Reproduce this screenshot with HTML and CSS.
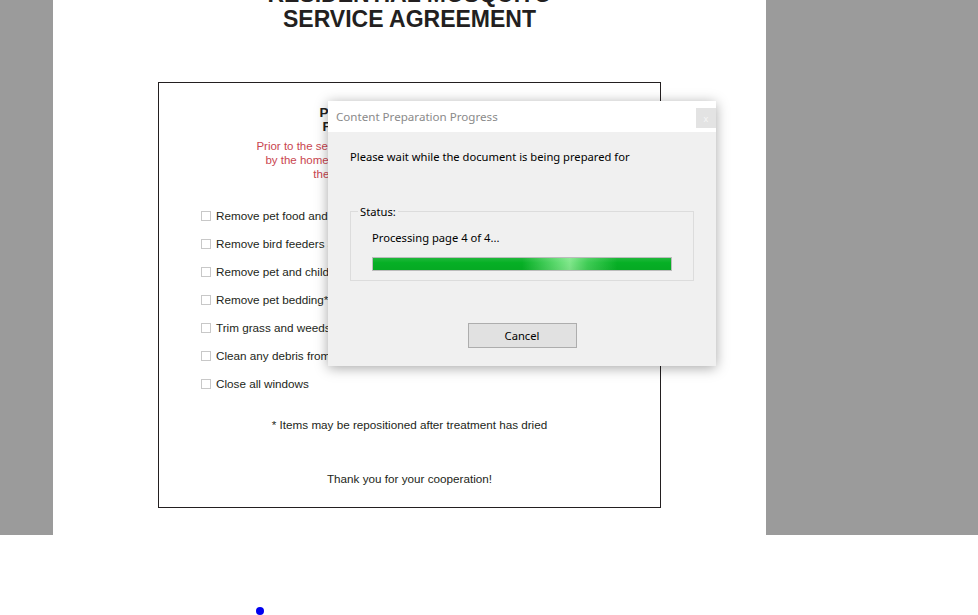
FILE: index.html
```html
<!DOCTYPE html>
<html>
<head>
<meta charset="utf-8">
<link rel="stylesheet" href="styles.css">
</head>
<body>
<div class="viewer">
  <div class="page">
    <h1 class="title">RESIDENTIAL MOSQUITO<br>SERVICE AGREEMENT</h1>
    <div class="box">
      <h2 class="heading">PREPARATIONS FOR YOUR<br>FIRST MOSQUITO SPRAYS</h2>
      <p class="note">Prior to the service, the following items should be completed<br>by the homeowner to ensure a safe and effective service<br>the full protection of your whole family</p>
      <ul class="checklist">
        <li><span class="cb"></span>Remove pet food and water dishes</li>
        <li><span class="cb"></span>Remove bird feeders and bird baths</li>
        <li><span class="cb"></span>Remove pet and children's toys</li>
        <li><span class="cb"></span>Remove pet bedding*</li>
        <li><span class="cb"></span>Trim grass and weeds</li>
        <li><span class="cb"></span>Clean any debris from gutters</li>
        <li><span class="cb"></span>Close all windows</li>
      </ul>
      <p class="foot">* Items may be repositioned after treatment has dried</p>
      <p class="thanks">Thank you for your cooperation!</p>
    </div>
  </div>
</div>
<div class="below"><span class="dot"></span></div>

<div class="dialog">
  <div class="dlg-title">
    <span>Content Preparation Progress</span>
    <span class="close">x</span>
  </div>
  <div class="dlg-body">
    <p class="wait">Please wait while the document is being prepared for</p>
    <fieldset class="status">
      <legend>Status:</legend>
      <p class="proc">Processing page 4 of 4...</p>
      <div class="bar"></div>
    </fieldset>
    <div class="actions"><button class="cancel">Cancel</button></div>
  </div>
</div>
</body>
</html>
```
FILE: styles.css
```css
html, body {
  margin: 0;
  padding: 0;
  background: #fff;
}
body {
  width: 978px;
  height: 615px;
  overflow: hidden;
  position: relative;
  font-family: "Liberation Sans", Arial, sans-serif;
}
.viewer {
  height: 535px;
  background: #9b9b9b;
  display: flex;
  overflow: hidden;
}
.page {
  margin-left: 53px;
  width: 713px;
  height: 535px;
  background: #fff;
  display: flex;
  flex-direction: column;
  align-items: center;
}
.title {
  margin: -18px 0 0 0;
  font-size: 23px;
  line-height: 25px;
  font-weight: bold;
  color: #231f20;
  text-align: center;
}
.box {
  margin-top: 50px;
  width: 501px;
  height: 424px;
  border: 1px solid #231f20;
  box-sizing: content-box;
  display: flex;
  flex-direction: column;
  align-items: center;
}
.heading {
  margin: 23px 0 0 0;
  font-size: 13.5px;
  line-height: 14px;
  font-weight: bold;
  color: #231f20;
  text-align: center;
}
.note {
  margin: 5px 0 0 0;
  font-size: 11.5px;
  line-height: 14px;
  color: #c9454f;
  text-align: center;
}
.checklist {
  list-style: none;
  margin: 28px 0 0 0;
  padding: 0 0 0 42px;
  align-self: stretch;
  display: flex;
  flex-direction: column;
  gap: 14px;
}
.checklist li {
  display: flex;
  align-items: center;
  font-size: 11.7px;
  line-height: 14px;
  color: #231f20;
}
.cb {
  width: 8px;
  height: 8px;
  border: 1px solid #c8c8c8;
  margin-right: 5px;
  flex: none;
}
.foot {
  margin: 27px 0 0 0;
  font-size: 11.7px;
  line-height: 14px;
  color: #231f20;
}
.thanks {
  margin: 40px 0 0 0;
  font-size: 11.7px;
  line-height: 14px;
  color: #231f20;
}
.below {
  height: 80px;
  position: relative;
}
.dot {
  position: absolute;
  left: 256px;
  top: 72px;
  width: 8px;
  height: 8px;
  border-radius: 50%;
  background: #0000f0;
}
.dialog {
  position: absolute;
  left: 328px;
  top: 101px;
  width: 388px;
  height: 265px;
  background: #f0f0f0;
  box-shadow: 0 2px 12px rgba(0,0,0,0.35);
  font-family: "Noto Sans", "Open Sans", sans-serif;
  display: flex;
  flex-direction: column;
}
.dlg-title {
  height: 31px;
  background: #fff;
  display: flex;
  align-items: center;
  justify-content: space-between;
  padding-left: 8px;
  padding-right: 0;
  font-size: 11.6px;
  color: #8a8a8a;
}
.close {
  width: 20px;
  height: 20px;
  background: #e3e3e3;
  color: #f6f6f6;
  font-size: 9px;
  display: flex;
  align-items: center;
  justify-content: center;
  align-self: flex-start;
  margin-top: 7px;
}
.dlg-body {
  padding: 17px 22px 0 22px;
  flex: 1;
  display: flex;
  flex-direction: column;
}
.wait {
  margin: 0;
  font-size: 11.2px;
  line-height: 16px;
  color: #000;
}
.status {
  margin: 39px 0 0 0;
  padding: 11px 21px 9px 21px;
  border: 1px solid #dcdcdc;
  min-width: 0;
}
.status legend {
  padding: 0 2px;
  margin-left: -14px;
  font-size: 11.2px;
  color: #000;
}
.proc {
  margin: 0;
  font-size: 11.2px;
  line-height: 16px;
  color: #000;
}
.bar {
  margin-top: 11px;
  width: 300px;
  height: 14px;
  box-sizing: border-box;
  border: 1px solid #bcbcbc;
  background:
    linear-gradient(to bottom, rgba(255,255,255,0.1), rgba(255,255,255,0) 40%, rgba(0,0,0,0.04)),
    linear-gradient(to right, #06b025 0%, #06b025 50%, #5fdb70 62%, #7fe78a 66%, #3fcd55 72%, #06b025 82%, #06b025 100%);
}
.actions {
  margin-top: 42px;
  display: flex;
  justify-content: center;
}
.cancel {
  width: 109px;
  height: 25px;
  background: #e1e1e1;
  border: 1px solid #adadad;
  font-family: "Noto Sans", "Open Sans", sans-serif;
  font-size: 11.2px;
  color: #000;
  padding: 0;
}
```
